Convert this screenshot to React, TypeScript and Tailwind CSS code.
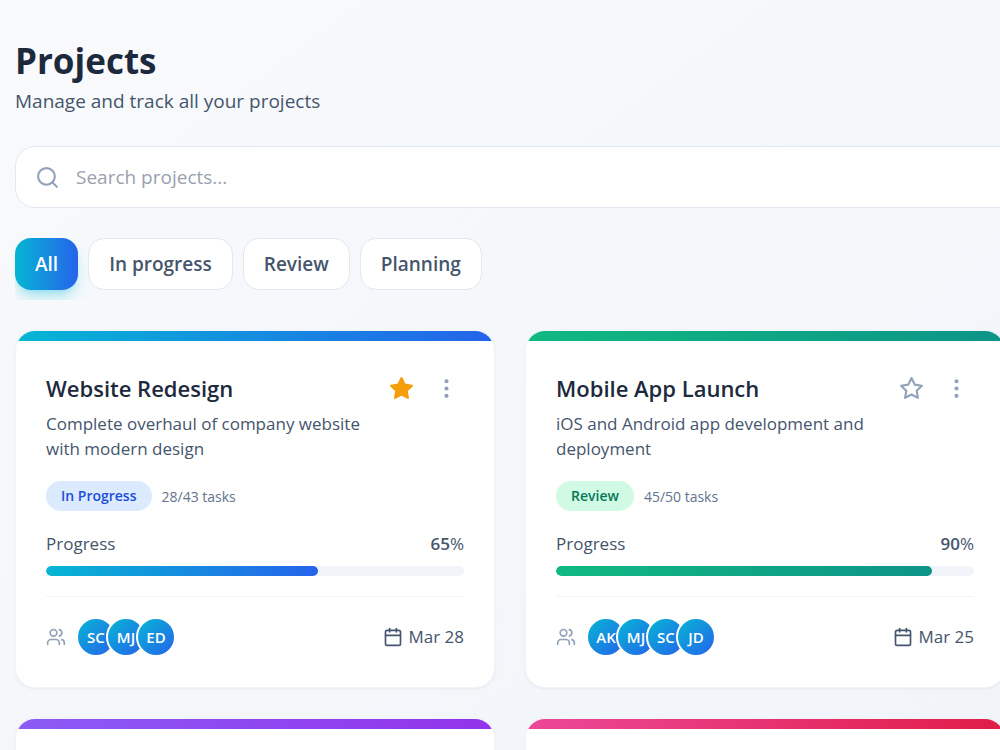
import React, { useState } from 'react';
import clsx from 'clsx';
import { Calendar, EllipsisVertical, Search, Users } from 'lucide-react';

interface ProjectDetails {
  title: string;
  description: string;
  status: string;
  statusColor: string;
  tasks: string;
  progress: number;
  team: string[];
  due: string;
  starred: boolean;
}

interface Project {
  id: number;
  gradient: string;
  details?: ProjectDetails;
}

const filters = ['All', 'In progress', 'Review', 'Planning'];

const projects: Project[] = [
  {
    id: 1,
    gradient: 'from-[#06b6d4] to-[#2563eb]',
    details: {
      title: 'Website Redesign',
      description: 'Complete overhaul of company website with modern design',
      status: 'In Progress',
      statusColor: 'bg-[#dbeafe] text-[#1d4ed8]',
      tasks: '28/43 tasks',
      progress: 65,
      team: ['SC', 'MJ', 'ED'],
      due: 'Mar 28',
      starred: true,
    },
  },
  {
    id: 2,
    gradient: 'from-[#10b981] to-[#0d9488]',
    details: {
      title: 'Mobile App Launch',
      description: 'iOS and Android app development and deployment',
      status: 'Review',
      statusColor: 'bg-[#d1fae5] text-[#047857]',
      tasks: '45/50 tasks',
      progress: 90,
      team: ['AK', 'MJ', 'SC', 'JD'],
      due: 'Mar 25',
      starred: false,
    },
  },
  { id: 3, gradient: 'from-[#8b5cf6] to-[#9333ea]' },
  { id: 4, gradient: 'from-[#ec4899] to-[#e11d48]' },
];

const StarIcon = ({ filled }: { filled: boolean }) => (
  <svg
    viewBox="0 0 24 24"
    className={clsx('size-[25px]', filled ? 'fill-[#f59e0b] text-[#f59e0b]' : 'fill-none text-slate-400')}
    stroke="currentColor"
    strokeWidth="2"
    strokeLinecap="round"
    strokeLinejoin="round"
    aria-hidden="true"
  >
    <polygon points="12 2 15.09 8.26 22 9.27 17 14.14 18.18 21.02 12 17.77 5.82 21.02 7 14.14 2 9.27 8.91 8.26 12 2" />
  </svg>
);

const ProjectBody = ({ details, gradient }: { details: ProjectDetails; gradient: string }) => {
  const [starred, setStarred] = useState(details.starred);

  return (
    <div className="p-[30px]">
      <div className="flex items-start justify-between gap-[10px] mb-5">
        <div className="flex-1">
          <h2 className="text-[22px] leading-[35px] font-semibold text-slate-800 mb-[5px]">{details.title}</h2>
          <p className="text-[17px] leading-[25px] text-slate-600">{details.description}</p>
        </div>
        <div className="flex gap-[10px]">
          <button type="button" className="p-[5px]" aria-label="Toggle favorite" onClick={() => setStarred(!starred)}>
            <StarIcon filled={starred} />
          </button>
          <button type="button" className="p-[5px] text-slate-400" aria-label="More options">
            <EllipsisVertical className="size-[25px]" />
          </button>
        </div>
      </div>

      <div className="flex items-center gap-[10px] mb-5">
        <span
          className={clsx(
            'rounded-full px-[15px] text-[14px] leading-[30px] font-semibold',
            details.statusColor
          )}
        >
          {details.status}
        </span>
        <span className="text-[14px] text-slate-500">{details.tasks}</span>
      </div>

      <div className="mb-5">
        <div className="flex justify-between mb-[10px] text-[17px] leading-[25px] text-slate-600">
          <span>Progress</span>
          <span>
            <span className="font-semibold">{details.progress}</span>%
          </span>
        </div>
        <div className="h-[10px] rounded-full bg-slate-100 overflow-hidden">
          <div
            className={clsx('h-full rounded-full bg-linear-to-r/srgb', gradient)}
            style={{ width: `${details.progress}%` }}
          />
        </div>
      </div>

      <div className="flex items-center justify-between border-t border-slate-100 pt-5">
        <div className="flex items-center gap-[10px]">
          <Users className="size-5 text-slate-400" />
          <div className="flex -space-x-[10px]">
            {details.team.map((member) => (
              <div
                key={member}
                className="flex items-center justify-center size-10 rounded-full border-2 border-white bg-linear-to-br/srgb from-[#06b6d4] to-[#2563eb] text-[15px] font-semibold text-white"
              >
                {member}
              </div>
            ))}
          </div>
        </div>
        <div className="flex items-center gap-[5px] text-[17px] text-slate-600">
          <Calendar className="size-5" />
          <span>{details.due}</span>
        </div>
      </div>
    </div>
  );
};

const ProjectCard = ({ project }: { project: Project }) => (
  <article className="min-h-[358px] rounded-[20px] border border-slate-100 bg-white shadow-[0_1px_3px_rgba(0,0,0,0.05)] overflow-hidden">
    <div className={clsx('h-[10px] bg-linear-to-r/srgb', project.gradient)} />
    {project.details && <ProjectBody details={project.details} gradient={project.gradient} />}
  </article>
);

const App = () => {
  const [active, setActive] = useState('All');

  return (
    <div className="h-screen overflow-hidden bg-linear-to-br from-slate-50 to-slate-100 font-['Segoe_UI','Open_Sans',sans-serif]">
      <main className="pl-[15px] -mr-[5px] pt-9">
        <header className="mb-[30px]">
          <h1 className="text-[35px] leading-[50px] font-bold text-slate-800">Projects</h1>
          <p className="text-[19px] leading-[30px] text-slate-600">Manage and track all your projects</p>
        </header>

        <label className="flex items-center gap-4 h-[62px] px-[19px] mb-[30px] -mr-5 rounded-[20px] border border-slate-200 bg-white">
          <Search className="size-[25px] text-slate-400" />
          <input
            type="text"
            aria-label="Search projects"
            placeholder="Search projects..."
            className="flex-1 text-[19px] text-slate-800 outline-none placeholder:text-gray-400"
          />
        </label>

        <div className="flex gap-[10px] pb-[10px] mb-[30px] overflow-x-auto">
          {filters.map((filter) => (
            <button
              key={filter}
              type="button"
              onClick={() => setActive(filter)}
              className={clsx(
                'h-[52px] px-5 rounded-[16px] text-[19px] font-semibold whitespace-nowrap',
                active === filter
                  ? 'bg-linear-to-r/srgb from-[#06b6d4] to-[#2563eb] text-white shadow-lg shadow-cyan-500/30'
                  : 'border border-slate-200 bg-white text-slate-600'
              )}
            >
              {filter}
            </button>
          ))}
        </div>

        <div className="grid grid-cols-2 gap-[30px]">
          {projects.map((project) => (
            <ProjectCard key={project.id} project={project} />
          ))}
        </div>
      </main>
    </div>
  );
};

export default App;
